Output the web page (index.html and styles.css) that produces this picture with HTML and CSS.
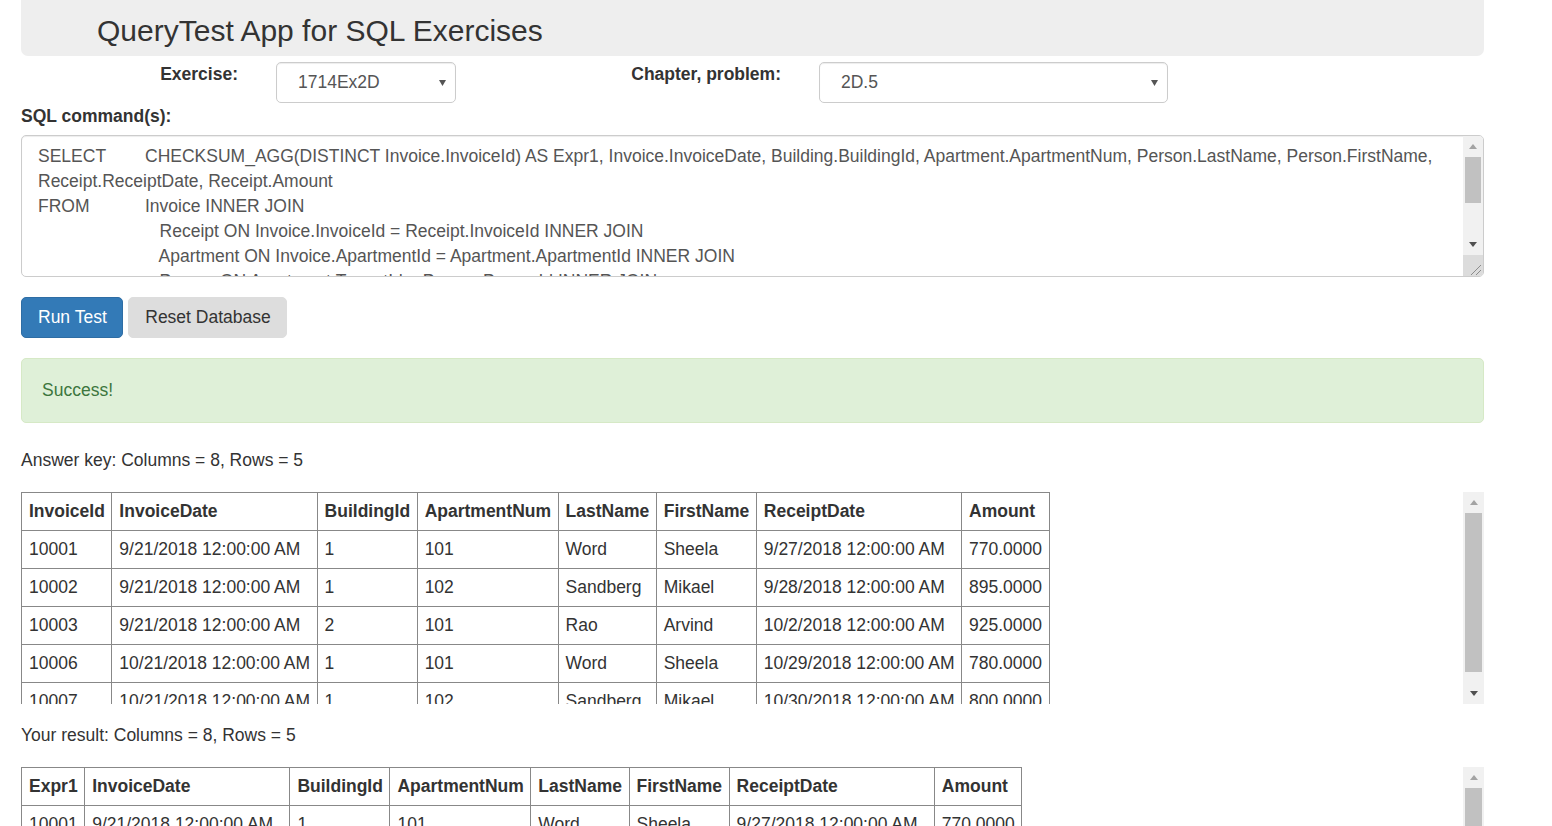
FILE: index.html
```html
<!DOCTYPE html>
<html lang="en">
<head>
<meta charset="utf-8">
<title>QueryTest App for SQL Exercises</title>
<link rel="stylesheet" href="styles.css">
</head>
<body>
<div class="page">
  <header class="header">
    <h1 class="title">QueryTest App for SQL Exercises</h1>
  </header>

  <div class="selector-row">
    <div class="field-label">Exercise:</div>
    <div class="field-control">
      <div class="select"><span>1714Ex2D</span><svg class="caret" width="7" height="6" viewBox="0 0 7 6"><path d="M0 0H7L3.5 6Z" fill="#555"/></svg></div>
    </div>
    <div class="field-label">Chapter, problem:</div>
    <div class="field-control">
      <div class="select"><span>2D.5</span><svg class="caret" width="7" height="6" viewBox="0 0 7 6"><path d="M0 0H7L3.5 6Z" fill="#555"/></svg></div>
    </div>
  </div>

  <div class="sql-label">SQL command(s):</div>
  <div class="sql-box">
<textarea class="sql-text" wrap="off" spellcheck="false">SELECT	CHECKSUM_AGG(DISTINCT Invoice.InvoiceId) AS Expr1, Invoice.InvoiceDate, Building.BuildingId, Apartment.ApartmentNum, Person.LastName, Person.FirstName, 
Receipt.ReceiptDate, Receipt.Amount
FROM	Invoice INNER JOIN
	   Receipt ON Invoice.InvoiceId = Receipt.InvoiceId INNER JOIN
	   Apartment ON Invoice.ApartmentId = Apartment.ApartmentId INNER JOIN
	   Person ON Apartment.TenantId = Person.PersonId INNER JOIN
	   Building ON Apartment.BuildingId = Building.BuildingId
GROUP BY Invoice.InvoiceDate, Building.BuildingId, Apartment.ApartmentNum, Person.LastName, Person.FirstName, Receipt.ReceiptDate, Receipt.Amount</textarea>
    <div class="vscroll vscroll-ta">
      <div class="sb-btn"><svg width="8" height="5" viewBox="0 0 8 5"><path d="M0 5L4 0L8 5Z" fill="#a3a3a3"/></svg></div>
      <div class="sb-thumb thumb-ta"></div>
      <div class="sb-track"></div>
      <div class="sb-btn"><svg width="8" height="5" viewBox="0 0 8 5"><path d="M0 0L4 5L8 0Z" fill="#505050"/></svg></div>
      <div class="sb-corner"><svg width="20" height="21" viewBox="0 0 20 21"><path d="M8 20L18 10M13 20L18 15" stroke="#8c8c8c" stroke-width="1"/></svg></div>
    </div>
  </div>

  <div class="actions">
    <button class="btn btn-primary" type="button">Run Test</button>
    <button class="btn btn-default" type="button">Reset Database</button>
  </div>

  <div class="alert">Success!</div>

  <p class="count">Answer key: Columns = 8, Rows = 5</p>
  <div class="scroll-box">
    <div class="scroll-content">
      <table class="grid">
        <tr><th>InvoiceId</th><th>InvoiceDate</th><th>BuildingId</th><th>ApartmentNum</th><th>LastName</th><th>FirstName</th><th>ReceiptDate</th><th>Amount</th></tr>
        <tr><td>10001</td><td>9/21/2018 12:00:00 AM</td><td>1</td><td>101</td><td>Word</td><td>Sheela</td><td>9/27/2018 12:00:00 AM</td><td>770.0000</td></tr>
        <tr><td>10002</td><td>9/21/2018 12:00:00 AM</td><td>1</td><td>102</td><td>Sandberg</td><td>Mikael</td><td>9/28/2018 12:00:00 AM</td><td>895.0000</td></tr>
        <tr><td>10003</td><td>9/21/2018 12:00:00 AM</td><td>2</td><td>101</td><td>Rao</td><td>Arvind</td><td>10/2/2018 12:00:00 AM</td><td>925.0000</td></tr>
        <tr><td>10006</td><td>10/21/2018 12:00:00 AM</td><td>1</td><td>101</td><td>Word</td><td>Sheela</td><td>10/29/2018 12:00:00 AM</td><td>780.0000</td></tr>
        <tr><td>10007</td><td>10/21/2018 12:00:00 AM</td><td>1</td><td>102</td><td>Sandberg</td><td>Mikael</td><td>10/30/2018 12:00:00 AM</td><td>800.0000</td></tr>
      </table>
    </div>
    <div class="vscroll">
      <div class="sb-btn"><svg width="8" height="5" viewBox="0 0 8 5"><path d="M0 5L4 0L8 5Z" fill="#a3a3a3"/></svg></div>
      <div class="sb-thumb thumb-table"></div>
      <div class="sb-track"></div>
      <div class="sb-btn"><svg width="8" height="5" viewBox="0 0 8 5"><path d="M0 0L4 5L8 0Z" fill="#505050"/></svg></div>
    </div>
  </div>

  <p class="count">Your result: Columns = 8, Rows = 5</p>
  <div class="scroll-box">
    <div class="scroll-content">
      <table class="grid">
        <tr><th>Expr1</th><th>InvoiceDate</th><th>BuildingId</th><th>ApartmentNum</th><th>LastName</th><th>FirstName</th><th>ReceiptDate</th><th>Amount</th></tr>
        <tr><td>10001</td><td>9/21/2018 12:00:00 AM</td><td>1</td><td>101</td><td>Word</td><td>Sheela</td><td>9/27/2018 12:00:00 AM</td><td>770.0000</td></tr>
        <tr><td>10002</td><td>9/21/2018 12:00:00 AM</td><td>1</td><td>102</td><td>Sandberg</td><td>Mikael</td><td>9/28/2018 12:00:00 AM</td><td>895.0000</td></tr>
        <tr><td>10003</td><td>9/21/2018 12:00:00 AM</td><td>2</td><td>101</td><td>Rao</td><td>Arvind</td><td>10/2/2018 12:00:00 AM</td><td>925.0000</td></tr>
        <tr><td>10006</td><td>10/21/2018 12:00:00 AM</td><td>1</td><td>101</td><td>Word</td><td>Sheela</td><td>10/29/2018 12:00:00 AM</td><td>780.0000</td></tr>
        <tr><td>10007</td><td>10/21/2018 12:00:00 AM</td><td>1</td><td>102</td><td>Sandberg</td><td>Mikael</td><td>10/30/2018 12:00:00 AM</td><td>800.0000</td></tr>
      </table>
    </div>
    <div class="vscroll">
      <div class="sb-btn"><svg width="8" height="5" viewBox="0 0 8 5"><path d="M0 5L4 0L8 5Z" fill="#a3a3a3"/></svg></div>
      <div class="sb-thumb thumb-table"></div>
      <div class="sb-track"></div>
      <div class="sb-btn"><svg width="8" height="5" viewBox="0 0 8 5"><path d="M0 0L4 5L8 0Z" fill="#505050"/></svg></div>
    </div>
  </div>
</div>
</body>
</html>
```

FILE: styles.css
```css
html, body {
  margin: 0;
  padding: 0;
  overflow: hidden;
  background: #fff;
}

body {
  font-family: "Liberation Sans", Arial, Helvetica, sans-serif;
  font-size: 17.5px;
  line-height: 25px;
  color: #333;
}

.page {
  width: 1463px;
  margin-left: 21px;
}

.header {
  background: #eee;
  border-radius: 0 0 7px 7px;
  height: 56px;
  box-sizing: border-box;
  padding: 14px 0 0 76px;
}

.title {
  margin: 0;
  font-size: 30px;
  font-weight: normal;
  line-height: 33px;
  color: #333;
}

.selector-row {
  display: grid;
  grid-template-columns: 236px 218px 325px 387px;
  margin-top: 6px;
}

.field-label {
  text-align: right;
  padding-right: 19px;
  font-weight: bold;
}

.field-control {
  padding: 0 19px;
}

.select {
  height: 41px;
  box-sizing: border-box;
  border: 1px solid #ccc;
  border-radius: 5px;
  display: flex;
  align-items: center;
  justify-content: space-between;
  padding: 0 9px 0 21px;
  color: #555;
  box-shadow: inset 0 1px 1px rgba(0, 0, 0, 0.075);
}

.caret {
  display: block;
}

.sql-label {
  font-weight: bold;
  margin: 1px 0 6px;
}

.sql-box {
  display: flex;
  height: 142px;
  box-sizing: border-box;
  border: 1px solid #ccc;
  border-radius: 5px;
  box-shadow: inset 0 1px 1px rgba(0, 0, 0, 0.075);
  overflow: hidden;
}

.sql-text {
  flex: 1;
  margin: 0;
  border: none;
  outline: none;
  resize: none;
  overflow: hidden;
  white-space: pre;
  padding: 7.5px 15px 7.5px 16px;
  font-family: inherit;
  font-size: 17.5px;
  line-height: 25px;
  color: #555;
  tab-size: 107px;
  -moz-tab-size: 107px;
  background: transparent;
}

.vscroll {
  width: 21px;
  flex: none;
  display: flex;
  flex-direction: column;
  background: #f1f1f1;
}

.vscroll-ta {
  width: 20px;
}

.sb-btn {
  height: 21px;
  flex: none;
  display: flex;
  align-items: center;
  justify-content: center;
}

.sb-btn svg {
  display: block;
}

.sb-thumb {
  background: #c1c1c1;
  margin: 0 2px;
  flex: none;
}

.thumb-ta {
  height: 46px;
}

.thumb-table {
  height: 159px;
}

.sb-track {
  flex: 1;
}

.sb-corner {
  height: 21px;
  flex: none;
  background: #dcdcdc;
}

.sb-corner svg {
  display: block;
}

.actions {
  display: flex;
  gap: 5px;
  margin-top: 20px;
}

.btn {
  height: 41px;
  box-sizing: border-box;
  padding: 0 15.5px 0 16px;
  border-radius: 5px;
  border: 1px solid transparent;
  font-family: inherit;
  font-size: 17.5px;
  line-height: 25px;
  cursor: pointer;
}

.btn-primary {
  background: #337ab7;
  border-color: #2e6da4;
  color: #fff;
}

.btn-default {
  background: #ddd;
  border-color: #ddd;
  color: #333;
}

.alert {
  margin: 20px 0 25px;
  padding: 19px 19px 19px 20px;
  background: #dff0d8;
  border: 1px solid #d6e9c6;
  border-radius: 5px;
  color: #3c763d;
}

.count {
  margin: 0;
}

.scroll-box {
  display: flex;
  height: 212px;
  margin: 19px 0;
}

.scroll-content {
  flex: 1;
  overflow: hidden;
}

.grid {
  border-collapse: collapse;
}

.grid th,
.grid td {
  border: 1px solid #888;
  padding: 6px 6.5px 6px 7px;
  text-align: left;
  white-space: nowrap;
  line-height: 25px;
}

.grid th {
  font-weight: bold;
}
```
